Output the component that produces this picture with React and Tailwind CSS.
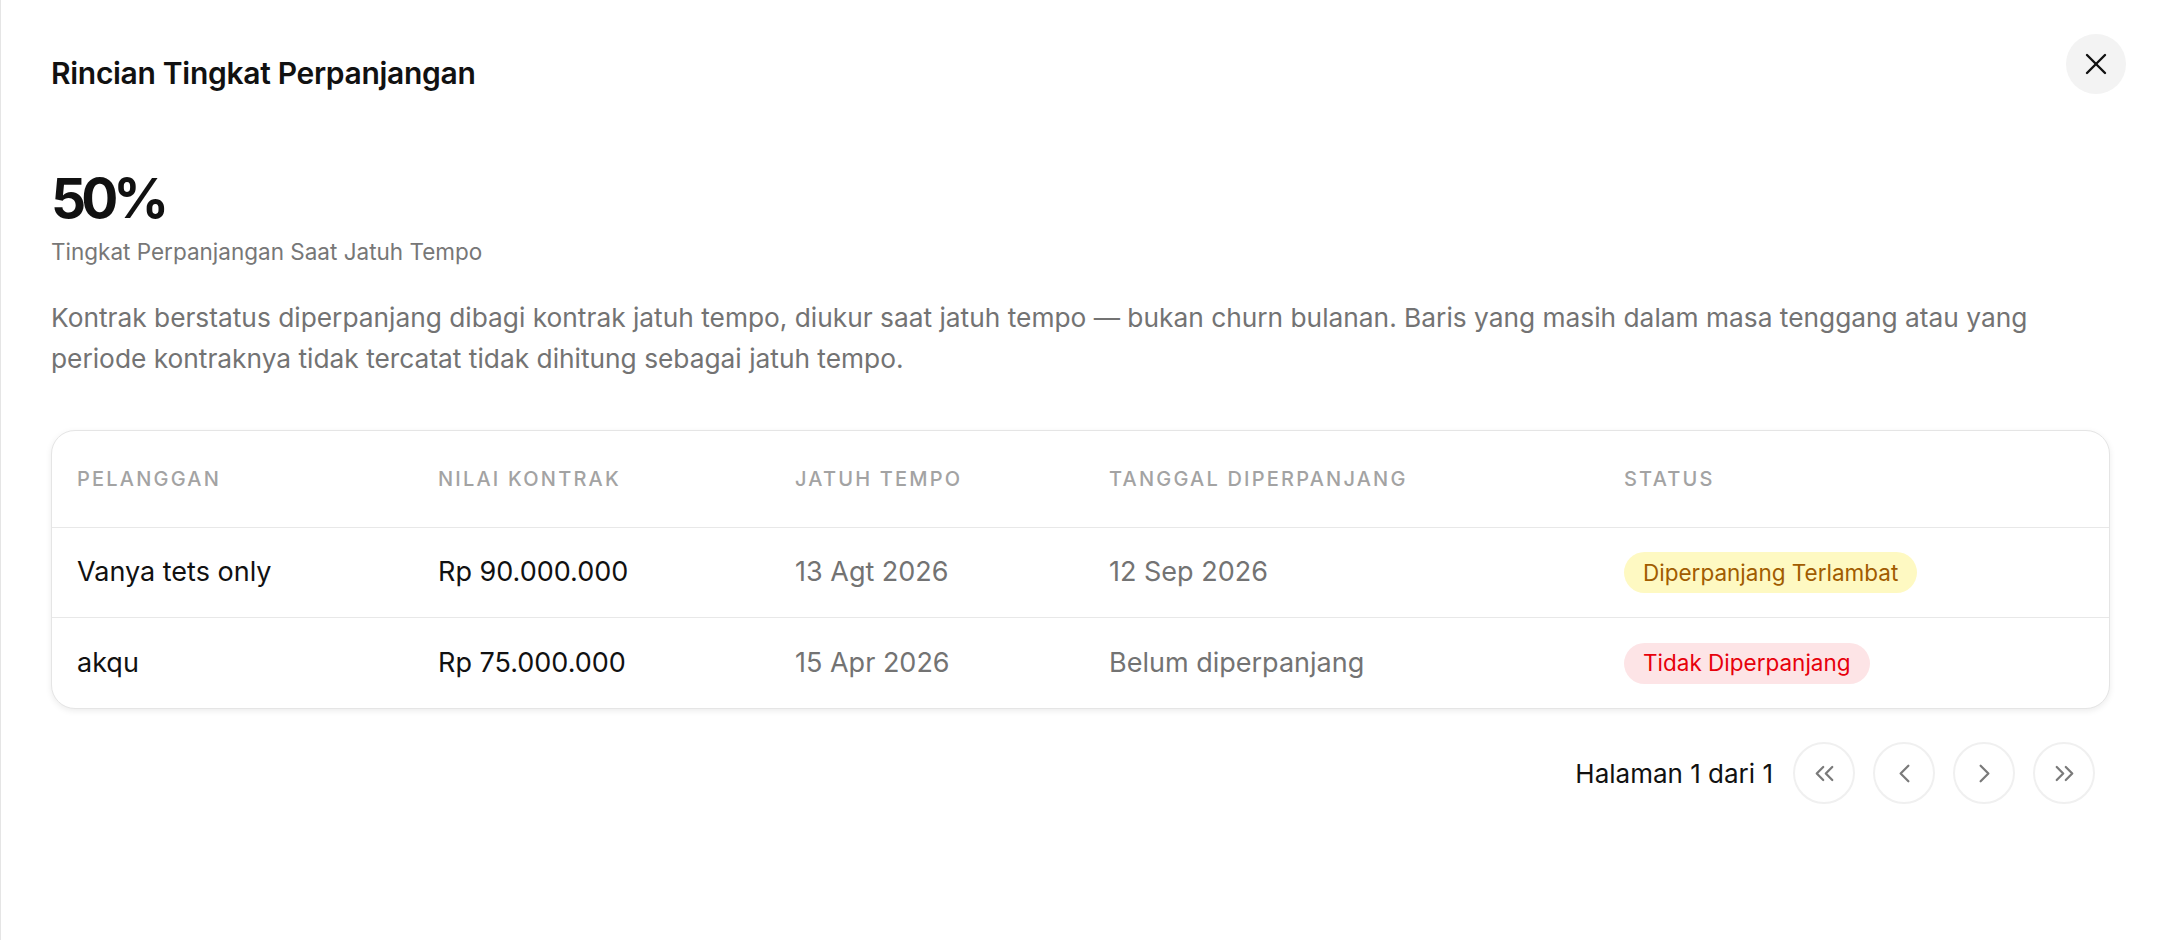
import React from "react";
import { X, ChevronLeft, ChevronRight, ChevronsLeft, ChevronsRight } from "lucide-react";

const rows = [
  {
    name: "Vanya tets only",
    value: "Rp 90.000.000",
    due: "13 Agt 2026",
    renewed: "12 Sep 2026",
    status: "Diperpanjang Terlambat",
    tone: "late",
  },
  {
    name: "akqu",
    value: "Rp 75.000.000",
    due: "15 Apr 2026",
    renewed: "Belum diperpanjang",
    status: "Tidak Diperpanjang",
    tone: "none",
  },
];

const cols = "grid grid-cols-[361px_357px_314px_515px_1fr]";

function PageButton({ children }) {
  return (
    <button className="w-[62px] h-[62px] rounded-full border-2 border-[#f0f0f0] bg-white flex items-center justify-center text-[#7a7a7a]">
      {children}
    </button>
  );
}

export default function App() {
  return (
    <div className="relative w-full h-[940px] bg-white border-l border-[#e5e5e5] px-[50px] font-['Inter','Liberation_Sans',sans-serif] text-[#111111]">
      <button className="absolute top-[34px] right-[34px] w-[60px] h-[60px] rounded-full bg-[#f3f3f3] flex items-center justify-center text-[#111]">
        <X size={36} strokeWidth={1.6} />
      </button>

      <h2 className="pt-[55px] text-[30px] leading-[36px] font-semibold tracking-[-0.01em]">
        Rincian Tingkat Perpanjangan
      </h2>

      <div className="mt-[80px] text-[55px] leading-[55px] font-bold tracking-[-0.09em]">50%</div>
      <div className="mt-[12px] text-[22.5px] leading-[28px] text-[#777777]">
        Tingkat Perpanjangan Saat Jatuh Tempo
      </div>

      <p className="mt-[31px] text-[26.3px] leading-[41px] text-[#737373]">
        Kontrak berstatus diperpanjang dibagi kontrak jatuh tempo, diukur saat jatuh tempo — bukan churn bulanan. Baris yang masih dalam masa tenggang atau yang periode kontraknya tidak tercatat tidak dihitung sebagai jatuh tempo.
      </p>

      <div className="mt-[51px] rounded-[24px] border border-[#e5e5e5] bg-white shadow-[0_2px_6px_rgba(0,0,0,0.08)] overflow-hidden">
        <div className={`${cols} h-[97px] items-center border-b border-[#e8e8e8]`}>
          {["Pelanggan", "Nilai Kontrak", "Jatuh Tempo", "Tanggal Diperpanjang", "Status"].map((h) => (
            <div key={h} className="pl-[25px] text-[20px] font-medium uppercase tracking-[0.11em] text-[#a3a3a3]">
              {h}
            </div>
          ))}
        </div>
        {rows.map((r, i) => (
          <div
            key={r.name}
            className={`${cols} h-[90px] items-center text-[27px] ${i < rows.length - 1 ? "border-b border-[#e8e8e8]" : ""}`}
          >
            <div className="pl-[25px] text-[#111111]">{r.name}</div>
            <div className="pl-[25px] text-[#111111]">{r.value}</div>
            <div className="pl-[25px] text-[#737373]">{r.due}</div>
            <div className="pl-[25px] text-[#737373]">{r.renewed}</div>
            <div className="pl-[25px]">
              {r.tone === "late" ? (
                <span className="inline-flex items-center h-[41px] px-[19px] rounded-full bg-[#fef9c2] text-[#a15c00] text-[22.5px]">
                  {r.status}
                </span>
              ) : (
                <span className="inline-flex items-center h-[41px] px-[19px] rounded-full bg-[#fde4e6] text-[#e7000b] text-[22.5px]">
                  {r.status}
                </span>
              )}
            </div>
          </div>
        ))}
      </div>

      <div className="mt-[33px] mr-[15px] flex items-center justify-end gap-[18px]">
        <span className="mr-[2px] text-[26px] text-[#111111]">Halaman 1 dari 1</span>
        <PageButton>
          <ChevronsLeft size={31} strokeWidth={1.75} />
        </PageButton>
        <PageButton>
          <ChevronLeft size={31} strokeWidth={1.75} />
        </PageButton>
        <PageButton>
          <ChevronRight size={31} strokeWidth={1.75} />
        </PageButton>
        <PageButton>
          <ChevronsRight size={31} strokeWidth={1.75} />
        </PageButton>
      </div>
    </div>
  );
}
